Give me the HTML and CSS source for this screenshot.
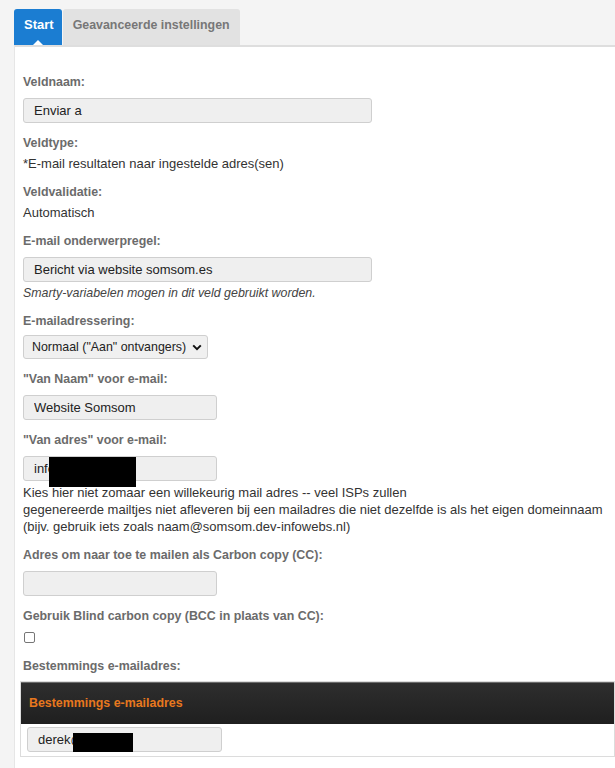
FILE: index.html
```html
<!DOCTYPE html>
<html lang="nl">
<head>
<meta charset="utf-8">
<title>Veld bewerken</title>
<link rel="stylesheet" href="styles.css">
</head>
<body>
<div class="tabs">
  <div class="tab tab-active">Start<span class="notch"></span></div>
  <div class="tab">Geavanceerde instellingen</div>
</div>
<div class="panel">
  <div class="field">
    <div class="label">Veldnaam:</div>
    <input class="input input-wide" type="text" value="Enviar a">
  </div>
  <div class="field">
    <div class="label label-tight">Veldtype:</div>
    <div class="value">*E-mail resultaten naar ingestelde adres(sen)</div>
  </div>
  <div class="field">
    <div class="label label-tight">Veldvalidatie:</div>
    <div class="value">Automatisch</div>
  </div>
  <div class="field">
    <div class="label">E-mail onderwerpregel:</div>
    <input class="input input-wide" type="text" value="Bericht via website somsom.es">
    <div class="help">Smarty-variabelen mogen in dit veld gebruikt worden.</div>
  </div>
  <div class="field">
    <div class="label label-sel">E-mailadressering:</div>
    <select class="select"><option>Normaal ("Aan" ontvangers)</option></select>
  </div>
  <div class="field">
    <div class="label">"Van Naam" voor e-mail:</div>
    <input class="input" type="text" value="Website Somsom">
  </div>
  <div class="field">
    <div class="label">"Van adres" voor e-mail:</div>
    <div class="redact-wrap">
      <input class="input" type="text" value="info@">
      <span class="redact redact-1"></span>
    </div>
    <div class="note">Kies hier niet zomaar een willekeurig mail adres -- veel ISPs zullen<br>gegenereerde mailtjes niet afleveren bij een mailadres die niet dezelfde is als het eigen domeinnaam<br>(bijv. gebruik iets zoals naam@somsom.dev-infowebs.nl)</div>
  </div>
  <div class="field">
    <div class="label">Adres om naar toe te mailen als Carbon copy (CC):</div>
    <input class="input" type="text" value="">
  </div>
  <div class="field field-check">
    <div class="label label-check">Gebruik Blind carbon copy (BCC in plaats van CC):</div>
    <span class="checkbox"></span>
  </div>
  <div class="field">
    <div class="label label-tbl">Bestemmings e-mailadres:</div>
    <div class="table">
      <div class="table-head">Bestemmings e-mailadres</div>
      <div class="table-row">
        <div class="redact-wrap">
          <input class="input input-row" type="text" value="derek@s">
          <span class="redact redact-2"></span>
        </div>
      </div>
    </div>
  </div>
</div>
</body>
</html>
```

FILE: styles.css
```css
html, body {
  margin: 0;
  padding: 0;
}
body {
  background: #f4f4f4;
  font-family: "Liberation Sans", Arial, sans-serif;
  font-size: 13px;
  color: #333;
  width: 615px;
  overflow: hidden;
}
.tabs {
  display: flex;
  gap: 1px;
  padding: 9px 0 0 14px;
  height: 36px;
}
.tab {
  position: relative;
  height: 36px;
  line-height: 32px;
  padding: 0 10px;
  background: #e2e2e2;
  color: #777;
  font-weight: bold;
  font-size: 12.4px;
  border-radius: 3px 3px 0 0;
}
.tab-active {
  background: #1b7dd2;
  color: #fff;
  font-size: 13px;
  padding: 0 8px 0 10px;
}
.notch {
  position: absolute;
  left: 50%;
  bottom: 0;
  margin-left: -5px;
  width: 0;
  height: 0;
  border-left: 5px solid transparent;
  border-right: 5px solid transparent;
  border-bottom: 5px solid #fff;
}
.panel {
  margin-left: 14px;
  background: #fff;
  border-top: 2px solid #dedede;
  border-left: 1px solid #e6e6e6;
  padding: 27px 0 20px 8px;
}
.field {
  margin-bottom: 12px;
}
.label {
  font-weight: bold;
  font-size: 12.4px;
  color: #6b6b6b;
  line-height: 16px;
  margin-bottom: 8px;
}
.label-tight {
  margin-bottom: 5px;
}
.label-sel {
  margin-bottom: 6px;
}
.label-tbl {
  margin-bottom: 7px;
}
.label-check {
  margin-bottom: 8px;
}
.field-check {
  margin-bottom: 15px;
}
.value {
  line-height: 16px;
}
.input {
  display: block;
  box-sizing: border-box;
  width: 194px;
  height: 25px;
  margin: 0;
  padding: 0 10px;
  background: #efefef;
  border: 1px solid #cfcfcf;
  border-radius: 3px;
  font-family: inherit;
  font-size: 13px;
  color: #222;
}
.input-wide {
  width: 349px;
}
.input-row {
  width: 195px;
}
.help {
  font-style: italic;
  font-size: 12.4px;
  color: #444;
  line-height: 16px;
  margin-top: 3px;
}
.select {
  display: block;
  box-sizing: border-box;
  width: 185px;
  height: 24px;
  margin: 0;
  padding: 0 16px 0 8px;
  font-family: inherit;
  font-size: 12.4px;
  color: #222;
  background-color: #f0f0f0;
  border: 1px solid #cfcfcf;
  border-radius: 3px;
  appearance: none;
  -webkit-appearance: none;
  background-image: url("data:image/svg+xml,%3Csvg xmlns='http://www.w3.org/2000/svg' width='10' height='7' viewBox='0 0 10 7'%3E%3Cpath d='M1.2 1.4 5 5.2 8.8 1.4' fill='none' stroke='%23111' stroke-width='2'/%3E%3C/svg%3E");
  background-repeat: no-repeat;
  background-position: right 5px center;
}
.redact-wrap {
  position: relative;
}
.redact {
  position: absolute;
  background: #000;
}
.redact-1 {
  left: 26px;
  top: 1px;
  width: 87px;
  height: 30px;
}
.redact-2 {
  left: 46px;
  top: 6px;
  width: 60px;
  height: 19px;
}
.note {
  margin-top: 3px;
  line-height: 17px;
}
.checkbox {
  display: block;
  width: 9px;
  height: 9px;
  margin-left: 1px;
  border: 1px solid #767676;
  border-radius: 2px;
  background: #fff;
}
.table {
  margin-left: -3px;
  border: 1px solid #dcdcdc;
  background: #fff;
}
.table-head {
  height: 41px;
  line-height: 40px;
  padding-left: 8px;
  background: linear-gradient(#2e2e2e, #1f1f1f);
  border-top: 1px solid #6a6a6a;
  color: #e8781e;
  font-weight: bold;
  font-size: 12.4px;
}
.table-row {
  padding: 3px 6px 4px 6px;
}
```
